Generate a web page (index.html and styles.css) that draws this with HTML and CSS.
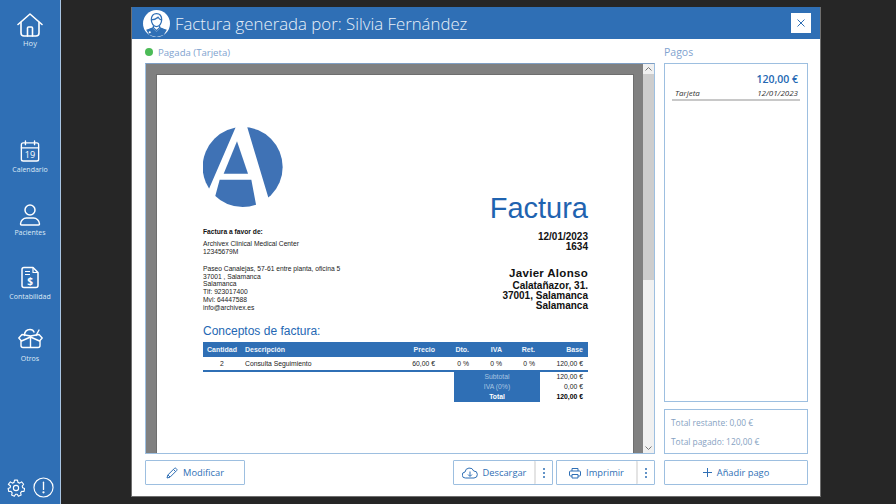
FILE: index.html
```html
<!DOCTYPE html>
<html lang="es">
<head>
<meta charset="utf-8">
<title>Factura</title>
<link rel="stylesheet" href="styles.css">
</head>
<body>
<aside class="sidebar">
  <a class="nav-item nav-home">
    <svg class="ico-home" viewBox="0 0 26 24" fill="none" stroke="#fff" stroke-width="1.600" stroke-linejoin="round" stroke-linecap="round"><path d="M1 11.500 13 1l12 10.500"/><path d="M4 9.500V20a3 3 0 0 0 3 3h12a3 3 0 0 0 3-3V9.500"/><path d="M10.500 23v-8a1 1 0 0 1 1-1h3a1 1 0 0 1 1 1v8"/></svg>
    <span>Hoy</span>
  </a>
  <a class="nav-item nav-cal">
    <svg class="ico" viewBox="0 0 22 24" fill="none" stroke="#fff" stroke-width="1.500" stroke-linecap="round"><rect x="1.500" y="3" width="19" height="20" rx="2"/><path d="M1.500 8.500h19M6 1v4M16 1v4"/><text x="11" y="20" text-anchor="middle" class="cal-num">19</text></svg>
    <span>Calendario</span>
  </a>
  <a class="nav-item nav-pat">
    <svg class="ico" viewBox="0 0 22 22" fill="none" stroke="#fff" stroke-width="1.500"><circle cx="11" cy="6" r="5"/><path d="M2.500 21h17a1 1 0 0 0 1-1c0-3.500-3-6-6-6h-7c-3 0-6 2.500-6 6a1 1 0 0 0 1 1z"/></svg>
    <span>Pacientes</span>
  </a>
  <a class="nav-item nav-acc">
    <svg class="ico" viewBox="0 0 18 22" fill="none" stroke="#fff" stroke-width="1.500" stroke-linejoin="round"><path d="M3 1h9l5 5v13a2 2 0 0 1-2 2H3a2 2 0 0 1-2-2V3a2 2 0 0 1 2-2z"/><path d="M12 1v5h5M4 5h5M4 8h5" stroke-width="1.200"/><text x="9" y="18" text-anchor="middle" class="acc-num">$</text></svg>
    <span>Contabilidad</span>
  </a>
  <a class="nav-item nav-oth">
    <svg class="ico" viewBox="0 0 25 20" fill="none" stroke="#fff" stroke-width="1.400" stroke-linejoin="round" stroke-linecap="round"><path d="M6.500 7C6.500 3 9 1 12 1c2 0 3.500 1 4 2.500M21 1.500 18 7"/><path d="M12.500 7.500 4 6 .8 9.500 3.500 12.500l9-4 9 4 2.700-3L21 6z"/><path d="M3 12.500V17a2 2 0 0 0 2 2h15a2 2 0 0 0 2-2v-4.500M12.500 8.500V19"/></svg>
    <span>Otros</span>
  </a>
  <div class="side-bottom">
    <svg class="ico-gear" viewBox="0 0 24 24" fill="none" stroke="#fff" stroke-width="1.500" stroke-linejoin="round"><circle cx="12" cy="12" r="3.500"/><path d="M10 1.500h4l.6 3 2.300 1 2.600-1.700 2.700 3.200-1.900 2.400.6 2.300 2.600 1-.9 4-3-.2-1.500 1.900.8 3-3.700 1.600-1.600-2.600h-2.200l-1.600 2.600-3.700-1.600.8-3-1.500-1.900-3 .2-.9-4 2.600-1 .6-2.300L1.800 7l2.700-3.200 2.600 1.700 2.300-1z"/></svg>
    <svg class="ico-info" viewBox="0 0 22 22" fill="none" stroke="#fff" stroke-width="1.200" stroke-linecap="round"><circle cx="11" cy="11" r="10"/><path d="M11 5.500v7.500" stroke-width="1.400"/><circle cx="11" cy="16" r=".6" fill="#fff"/></svg>
  </div>
</aside>

<main class="stage">
  <section class="modal">
    <header class="modal-head">
      <svg class="avatar" viewBox="0 0 26 26"><circle cx="13" cy="13" r="13" fill="#fff"/><g fill="none" stroke="#2f6fb5" stroke-width="1.200"><path d="M8 9.500c0-4 2-6 5-6s5 2 5 6c0 3-2 6.500-5 6.500s-5-3.500-5-6.500z"/><path d="M8 9.500c2 0 5-1 6.500-2.500 1 1.500 2.500 2.500 3.500 2.500"/><path d="M10 15v2l-6 3M16 15v2l6 3M10 17l3 3 3-3"/></g><path d="M3 19l6-2 4 4 4-4 6 2-3 5-7 2-7-2z" fill="#2f6fb5"/><circle cx="6.500" cy="21.500" r="1" fill="#fff"/></svg>
      <h1>Factura generada por: Silvia Fernández</h1>
      <button class="close" aria-label="Cerrar"><svg viewBox="0 0 8 8" width="8" height="8" stroke="#2f6fb5" fill="none"><path d="M.5.500l7 7M7.500.500l-7 7"/></svg></button>
    </header>
    <div class="modal-body">
      <div class="col-left">
        <div class="status"><i class="dot"></i>Pagada (Tarjeta)</div>
        <div class="viewer">
          <div class="canvas">
            <article class="page">
              <div class="inv-top">
                <div class="inv-from">
                  <svg class="logo" viewBox="40 22 240 240"><circle cx="159" cy="142" r="120" fill="#3f72b5"/><path d="M140 18 50 226l26 6 14-52h95l15 80 42-6-70-234z" fill="#fff"/><path d="M142 65 102 162h73z" fill="#3f72b5"/></svg>
                  <p class="from-title">Factura a favor de:</p>
                  <p class="from-text">Archivex Clinical Medical Center<br>12345679M</p>
                  <p class="from-text from-addr">Paseo Canalejas, 57-61 entre planta, oficina 5<br>37001 , Salamanca<br>Salamanca<br>Tlf: 923017400<br>Mvl: 64447588<br>info@archivex.es</p>
                </div>
                <div class="inv-to">
                  <h2>Factura</h2>
                  <p class="to-date">12/01/2023<br>1634</p>
                  <p class="to-name">Javier Alonso</p>
                  <p class="to-addr">Calatañazor, 31.<br>37001, Salamanca<br>Salamanca</p>
                </div>
              </div>
              <h3>Conceptos de factura:</h3>
              <table class="items">
                <colgroup><col class="c1"><col class="c2"><col class="c3"><col class="c4"><col class="c5"><col class="c6"><col class="c7"></colgroup>
                <thead><tr><th class="ctr">Cantidad</th><th class="lft">Descripción</th><th>Precio</th><th>Dto.</th><th>IVA</th><th>Ret.</th><th>Base</th></tr></thead>
                <tbody><tr><td class="ctr">2</td><td class="lft">Consulta Seguimiento</td><td>60,00 €</td><td>0 %</td><td>0 %</td><td>0 %</td><td>120,00 €</td></tr></tbody>
              </table>
              <div class="sums">
                <div class="sum-row"><span class="sum-label">Subtotal</span><span class="sum-val">120,00 €</span></div>
                <div class="sum-row"><span class="sum-label">IVA (0%)</span><span class="sum-val">0,00 €</span></div>
                <div class="sum-row sum-total"><span class="sum-label">Total</span><span class="sum-val">120,00 €</span></div>
              </div>
            </article>
          </div>
          <div class="scrollbar">
            <span class="arrow"><svg viewBox="0 0 7 4" width="7" height="4" fill="none" stroke="#777"><path d="M.5 3.500l3-3 3 3"/></svg></span>
            <span class="thumb"></span>
            <span class="arrow arrow-end"><svg viewBox="0 0 7 4" width="7" height="4" fill="none" stroke="#777"><path d="M.5.500l3 3 3-3"/></svg></span>
          </div>
        </div>
        <div class="toolbar">
          <button class="btn btn-edit"><svg viewBox="0 0 12 12" width="12" height="12" fill="none" stroke="#2f6fb5"><path d="M1 11l.8-3L8.500 1.300a1 1 0 0 1 1.400 0l.8.8a1 1 0 0 1 0 1.400L4 10.200zM7.500 2.500l2 2M2 8l2 2"/></svg>Modificar</button>
          <div class="toolbar-right">
            <div class="btn-split"><button class="btn btn-main"><svg viewBox="0 0 16 12" width="16" height="12" fill="none" stroke="#2f6fb5"><path d="M4 11H3.500A3 3 0 0 1 3 5a4.500 4.500 0 0 1 8.700-1A3.500 3.500 0 0 1 12 11zM8 4.500v4.500M6 7.500 8 9.500l2-2" stroke-linejoin="round"/></svg>Descargar</button><button class="btn-more" aria-label="Más"><i></i><i></i><i></i></button></div>
            <div class="btn-split btn-split-narrow"><button class="btn btn-main"><svg viewBox="0 0 12 12" width="12" height="12" fill="none" stroke="#2f6fb5"><path d="M3 4V1.500h6V4M3 9H1.500a1 1 0 0 1-1-1V5a1 1 0 0 1 1-1h9a1 1 0 0 1 1 1v3a1 1 0 0 1-1 1H9M3 7.500h6v3.500H3z"/></svg>Imprimir</button><button class="btn-more" aria-label="Más"><i></i><i></i><i></i></button></div>
          </div>
        </div>
      </div>
      <div class="col-right">
        <div class="pay-title">Pagos</div>
        <div class="pay-box">
          <div class="pay-amount">120,00 €</div>
          <div class="pay-line"><span>Tarjeta</span><span>12/01/2023</span></div>
        </div>
        <div class="pay-totals">
          <p>Total restante: 0,00 €</p>
          <p>Total pagado: 120,00 €</p>
        </div>
        <button class="btn btn-add"><svg viewBox="0 0 9 9" width="9" height="9" stroke="#2f6fb5" fill="none"><path d="M4.500 0v9M0 4.500h9"/></svg>Añadir pago</button>
      </div>
    </div>
  </section>
</main>
</body>
</html>
```
FILE: styles.css
```css
* { box-sizing: border-box; }
html, body { margin: 0; height: 100%; }
body {
  display: flex;
  width: 896px;
  height: 504px;
  overflow: hidden;
  background: #262626;
  font-family: "Open Sans", "Noto Sans", sans-serif;
}
p, h1, h2, h3 { margin: 0; font-weight: normal; }

.sidebar {
  width: 61px;
  height: 504px;
  flex: none;
  display: flex;
  flex-direction: column;
  align-items: center;
  background: #2f6fb5;
  border-right: 1px solid #a9c5e2;
  color: #dfeaf6;
}
.nav-item {
  display: flex;
  flex-direction: column;
  align-items: center;
  font-size: 7px;
  line-height: 10px;
}
.nav-home { margin-top: 13px; gap: 1px; }
.ico-home { width: 26px; height: 24px; }
.nav-home span { font-size: 7.500px; }
.ico { display: block; }
.nav-cal { margin-top: 91px; gap: 2px; }
.nav-cal .ico { width: 20px; height: 24px; }
.nav-pat { margin-top: 29px; gap: 2px; }
.nav-pat .ico { width: 22px; height: 22px; }
.nav-acc { margin-top: 28px; gap: 3px; }
.nav-acc .ico { width: 18px; height: 23px; }
.nav-oth { margin-top: 26px; gap: 5px; }
.nav-oth .ico { width: 25px; height: 21px; }
.cal-num { fill: #fff; stroke: none; font-size: 10px; font-family: "Open Sans", sans-serif; }
.acc-num { fill: #fff; stroke: none; font-size: 10px; font-weight: 700; font-family: "Open Sans", sans-serif; }
.side-bottom {
  margin-top: auto;
  margin-bottom: 6px;
  display: flex;
  align-items: center;
  gap: 8px;
}
.ico-gear { width: 18px; height: 18px; }
.ico-info { width: 21px; height: 21px; }

.stage { flex: 1; padding: 7px 0 0 70px; }
.modal {
  width: 690px;
  height: 490px;
  background: #fff;
  border: 1px solid #6f6f6f;
  border-top: 0;
  display: flex;
  flex-direction: column;
}
.modal-head {
  height: 32px;
  flex: none;
  display: flex;
  align-items: center;
  padding: 0 9px 0 11px;
  background: #2f6fb5;
  color: #e9f1f9;
}
.avatar { width: 27px; height: 27px; flex: none; margin-right: 5px; }
.modal-head h1 { flex: 1; font-size: 16.800px; font-weight: 300; white-space: nowrap; }
.close {
  width: 20px;
  height: 20px;
  padding: 0;
  border: 0;
  background: #fff;
  display: flex;
  align-items: center;
  justify-content: center;
}
.modal-body { flex: 1; display: flex; gap: 9px; padding: 0 12px 12px 13px; }
.col-left { width: 510px; display: flex; flex-direction: column; }
.col-right { width: 144px; display: flex; flex-direction: column; }

.status, .pay-title {
  height: 24px;
  display: flex;
  align-items: center;
  padding-top: 2px;
  font-size: 9.600px;
  color: #7fa3cf;
}
.dot { width: 8px; height: 8px; border-radius: 50%; background: #4cbb57; margin-right: 5px; }
.pay-title { font-size: 10.500px; }

.viewer {
  height: 391px;
  display: flex;
  background: #f0f0f0;
  border: 1px solid #9dbfe0;
  border-top-color: #7f9fc4;
  overflow: hidden;
}
.canvas {
  flex: 1;
  background: #808080;
  padding: 11px 11px 0;
  overflow: hidden;
}
.page {
  width: 476px;
  height: 500px;
  background: #fff;
  box-shadow: 0 0 0 1px #6e6e6e;
  padding: 52px 45px 0 46px;
  font-family: "Liberation Sans", Arial, sans-serif;
  color: #111;
}
.scrollbar { width: 11px; flex: none; display: flex; flex-direction: column; }
.arrow { height: 10px; display: flex; align-items: center; justify-content: center; }
.thumb { height: 206px; background: #cdcdcd; }
.arrow-end { margin-top: auto; }

.inv-top { display: flex; justify-content: space-between; align-items: flex-end; }
.logo { display: block; width: 80px; height: 80px; margin-bottom: 21px; }
.from-title { font-size: 6.700px; font-weight: 700; line-height: 8px; margin-bottom: 4px; }
.from-text { font-size: 6.700px; line-height: 7.900px; color: #222; }
.from-addr { margin-top: 9px; line-height: 7.800px; }
.inv-to { text-align: right; padding-bottom: 1px; }
.inv-to h2 { font-size: 29px; line-height: 34px; color: #1f63b0; margin-bottom: 7px; }
.to-date { font-size: 10px; font-weight: 700; line-height: 10px; margin-bottom: 14px; }
.to-name { font-size: 11.500px; font-weight: 700; line-height: 15px; letter-spacing: .3px; }
.to-addr { font-size: 10px; font-weight: 700; line-height: 9.700px; }

h3 { font-size: 12px; line-height: 16px; color: #2467b3; margin-top: 11px; margin-bottom: 3px; }
.items { width: 385px; table-layout: fixed; border-collapse: collapse; font-size: 6.800px; }
.c1 { width: 38px; } .c2 { width: 149px; } .c3 { width: 50px; } .c4 { width: 34px; }
.c5 { width: 33px; } .c6 { width: 33px; } .c7 { width: 48px; }
.items th {
  height: 15px;
  background: #2f6fb5;
  color: #eef4fa;
  font-weight: 700;
  font-size: 7px;
  padding: 0 5px 0 4px;
  text-align: right;
}
.items td {
  height: 14px;
  padding: 0 5px 0 4px;
  text-align: right;
  color: #222;
  border-bottom: 2px solid #2f6fb5;
}
.items .ctr { text-align: center; padding: 0; }
.items .lft { text-align: left; }
.sums { display: flex; flex-direction: column; font-size: 6.800px; }
.sum-row { display: flex; justify-content: flex-end; height: 10.300px; line-height: 10.300px; }
.sum-label { width: 86px; background: #2f6fb5; color: #a9c5e2; text-align: center; }
.sum-val { width: 48px; padding-right: 5px; text-align: right; color: #222; }
.sum-total .sum-label { color: #fff; font-weight: 700; }
.sum-total .sum-val { font-weight: 700; color: #000; }

.toolbar { margin-top: 6px; height: 25px; display: flex; justify-content: space-between; }
.toolbar-right { display: flex; gap: 3px; }
.btn {
  display: flex;
  align-items: center;
  justify-content: center;
  gap: 5px;
  height: 25px;
  padding: 0;
  background: #fff;
  border: 1px solid #9dbfe0;
  border-radius: 1px;
  color: #2f6fb5;
  font-family: inherit;
  font-size: 9.300px;
}
.btn-edit { width: 100px; }
.btn-split { display: flex; width: 100px; height: 25px; border: 1px solid #9dbfe0; border-radius: 1px; }
.btn-split-narrow { width: 99px; }
.btn-main { flex: 1; height: 23px; border: 0; border-right: 2px solid #e4e4e4; }
.btn-more {
  width: 16px;
  padding: 0;
  border: 0;
  background: #fff;
  display: flex;
  flex-direction: column;
  align-items: center;
  justify-content: center;
  gap: 2px;
}
.btn-more i { width: 2px; height: 2px; background: #2f6fb5; border-radius: 50%; }

.pay-box {
  height: 339px;
  border: 1px solid #9dbfe0;
  padding: 7px 7px 0 7px;
}
.pay-amount { font-size: 10.500px; line-height: 16px; text-align: right; color: #2467b3; padding-right: 2px; font-weight: 600; }
.pay-line {
  display: flex;
  justify-content: space-between;
  height: 14px;
  line-height: 12px;
  padding: 0 2px 0 3px;
  font-size: 8px;
  font-style: italic;
  color: #333;
  border-bottom: 2px solid #c8c8c8;
}
.pay-totals {
  margin-top: 7px;
  height: 45px;
  border: 1px solid #9dbfe0;
  padding: 2.500px 0 0 6px;
  font-size: 8.400px;
  line-height: 19px;
  color: #86a2c2;
}
.btn-add { margin-top: 6px; width: 144px; }
```
